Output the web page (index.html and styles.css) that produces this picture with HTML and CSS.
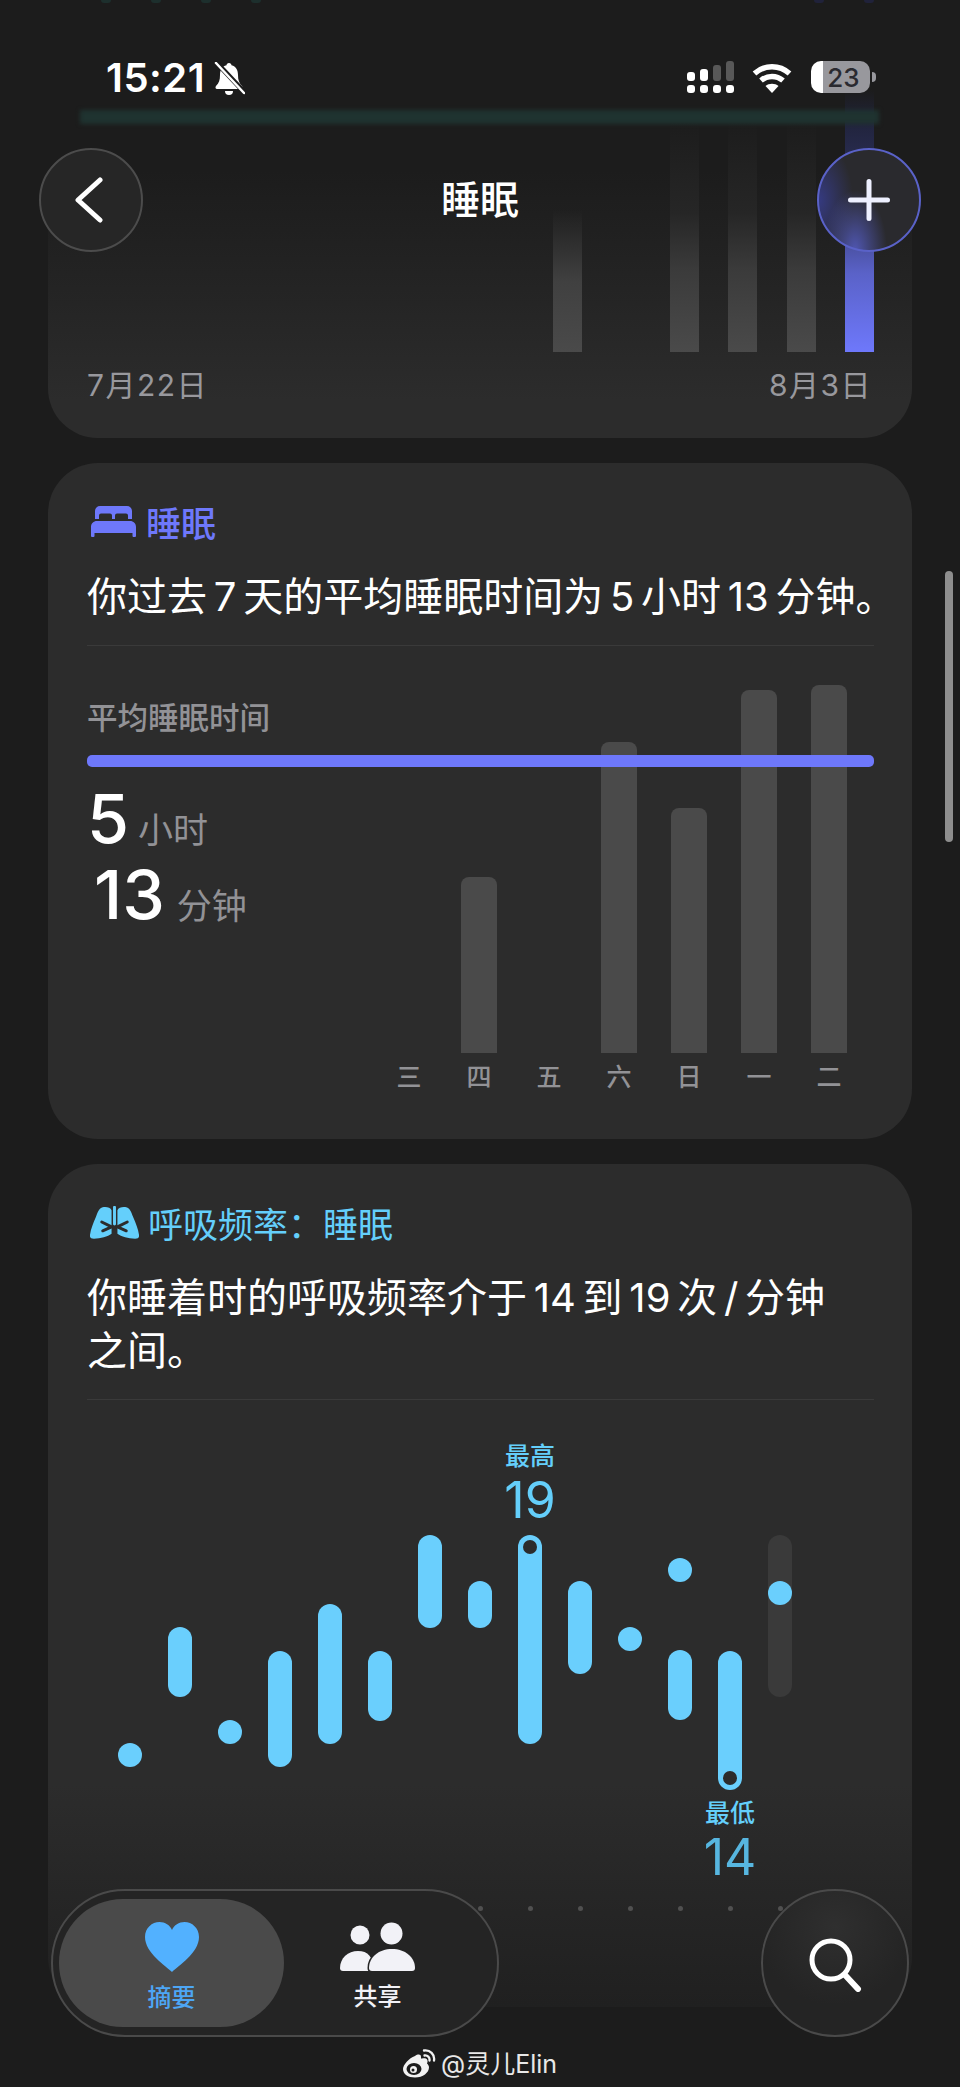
FILE: index.html
```html
<!DOCTYPE html>
<html lang="zh-CN">
<head>
  <meta charset="UTF-8">
  <title>睡眠</title>
  <link rel="stylesheet" href="styles.css">
</head>
<body>
<div class="page">

  <div class="feed">

    <section class="card card-top">
      <div class="peek">
        <i class="teal"></i><i class="teal"></i><i class="teal"></i><i class="teal"></i>
        <b></b>
        <i class="blue"></i><i class="blue"></i>
      </div>
      <div class="goal-line"></div>
      <div class="days">
        <span></span><span></span><span></span><span></span><span></span><span></span><span></span>
        <span class="short"></span>
        <span></span>
        <span class="tall"></span>
        <span class="tall"></span>
        <span class="tall"></span>
        <span class="today"></span>
      </div>
      <div class="range">
        <span>7月22日</span>
        <span>8月3日</span>
      </div>
    </section>

    <section class="card card-sleep">
      <h2 class="card-title sleep">
        <svg class="icon-bed" viewBox="0 0 45 31"><path fill="#6e78fb" d="M9 0h27a5 5 0 0 1 5 5v8h-4V9.500a2 2 0 0 0-2-2h-9a2 2 0 0 0-2 2V13h-3V9.500a2 2 0 0 0-2-2h-9a2 2 0 0 0-2 2V13H4V5a5 5 0 0 1 5-5z"/><path fill="#6e78fb" d="M6 15h33c3.500 0 6 2.500 6 6v9a1 1 0 0 1-1 1h-1.500a1 1 0 0 1-1-1v-3H3.500v3a1 1 0 0 1-1 1H1a1 1 0 0 1-1-1v-9c0-3.500 2.500-6 6-6z"/></svg>
        睡眠
      </h2>
      <p class="summary">你过去 7 天的平均睡眠时间为 5 小时 13 分钟。</p>
      <div class="sleep-body">
        <div class="avg-line"></div>
        <div class="metrics">
          <div class="metrics-label">平均睡眠时间</div>
          <div class="metric"><strong>5</strong><span>小时</span></div>
          <div class="metric second"><strong>13</strong><span>分钟</span></div>
        </div>
        <div class="week">
          <div class="day"><div class="day-bar" style="height:0"></div><span>三</span></div>
          <div class="day"><div class="day-bar" style="height:176px"></div><span>四</span></div>
          <div class="day"><div class="day-bar" style="height:0"></div><span>五</span></div>
          <div class="day"><div class="day-bar" style="height:311px"></div><span>六</span></div>
          <div class="day"><div class="day-bar" style="height:245px"></div><span>日</span></div>
          <div class="day"><div class="day-bar" style="height:363px"></div><span>一</span></div>
          <div class="day"><div class="day-bar" style="height:368px"></div><span>二</span></div>
        </div>
      </div>
    </section>

    <section class="card card-resp">
      <h2 class="card-title resp">
        <svg class="icon-lungs" viewBox="0 0 50 33">
          <path fill="#64cffb" d="M22 4C21 1 16 0 13 1 9 2 8 6 6 11 3 18 1 23 0 29c-.4 3 1 4 4 4 7 0 14-2 18-5z"/>
          <path fill="#64cffb" d="M28 4c1-3 6-4 9-3 4 1 5 5 7 10 3 7 5 12 6 18 .4 3-1 4-4 4-7 0-14-2-18-5z"/>
          <path fill="none" stroke="#64cffb" stroke-width="3" stroke-linecap="round" d="M25 1v17"/>
          <path fill="none" stroke="#2c2c2c" stroke-width="3" stroke-linecap="round" d="M22 21l-10-5M22 21l-9 4M28 21l10-5M28 21l9 4"/>
        </svg>
        <span class="title-text">呼吸频率&#65306;睡眠</span>
      </h2>
      <p class="summary">你睡着时的呼吸频率介于 14 到 19 次 / 分钟<br>之间。</p>
      <div class="resp-body">
        <div class="resp-chart">
          <div class="resp-col"><div class="seg" style="margin-top:208px;height:24px"></div></div>
          <div class="resp-col"><div class="seg" style="margin-top:92px;height:70px"></div></div>
          <div class="resp-col"><div class="seg" style="margin-top:185px;height:24px"></div></div>
          <div class="resp-col"><div class="seg" style="margin-top:116px;height:116px"></div></div>
          <div class="resp-col"><div class="seg" style="margin-top:69px;height:140px"></div></div>
          <div class="resp-col"><div class="seg" style="margin-top:116px;height:70px"></div></div>
          <div class="resp-col"><div class="seg" style="margin-top:0;height:93px"></div></div>
          <div class="resp-col"><div class="seg" style="margin-top:46px;height:47px"></div></div>
          <div class="resp-col">
            <div class="extreme high"><span>最高</span><strong>19</strong></div>
            <div class="seg hole-top" style="margin-top:0;height:209px"></div>
          </div>
          <div class="resp-col"><div class="seg" style="margin-top:46px;height:93px"></div></div>
          <div class="resp-col"><div class="seg" style="margin-top:92px;height:24px"></div></div>
          <div class="resp-col">
            <div class="seg" style="margin-top:23px;height:24px"></div>
            <div class="seg" style="margin-top:68px;height:70px"></div>
          </div>
          <div class="resp-col">
            <div class="seg hole-bottom" style="margin-top:116px;height:139px"></div>
            <div class="extreme low"><span>最低</span><strong>14</strong></div>
          </div>
          <div class="resp-col">
            <div class="track"><div class="seg" style="margin-top:46px;height:24px"></div></div>
          </div>
        </div>
        <div class="ticks">
          <i></i><i></i><i></i><i></i><i></i><i></i><i></i><i></i><i></i><i></i><i></i><i></i><i></i><i></i>
        </div>
      </div>
    </section>
  </div>

  <div class="scroll-thumb"></div>

  <header class="status">
    <div class="status-left">
      <span class="clock">15:21</span>
      <svg class="icon-bell" viewBox="0 0 32 33">
        <path fill="#fff" d="M16 1c1.500 0 2.500 1 2.500 2.300C23 4.500 25 8 25 13c0 5 1 8 4 11 1 1 .5 3-1 3H4c-1.500 0-2-2-1-3 3-3 4-6 4-11 0-5 2-8.500 6.500-9.700C13.500 2 14.500 1 16 1z"/>
        <path fill="#fff" d="M12 29h8a4 4 0 0 1-8 0z"/>
        <path fill="none" stroke="#1c1c1c" stroke-width="5" d="M1-2l32 34"/>
        <path fill="none" stroke="#fff" stroke-width="2.500" stroke-linecap="round" d="M3 1l28 30"/>
      </svg>
    </div>
    <div class="status-right">
      <div class="signal">
        <div class="signal-col"><i style="height:9px"></i><i style="height:8px"></i></div>
        <div class="signal-col"><i style="height:12px"></i><i style="height:8px"></i></div>
        <div class="signal-col off"><i style="height:16px"></i><i style="height:8px"></i></div>
        <div class="signal-col off"><i style="height:20px"></i><i style="height:8px"></i></div>
      </div>
      <svg class="icon-wifi" viewBox="0 0 40 30">
        <path fill="none" stroke="#fff" stroke-width="5.500" d="M2.500 10.500c10-9 25-9 35 0"/>
        <path fill="none" stroke="#fff" stroke-width="5.500" d="M9 17.500c6.500-5.500 15.500-5.500 22 0"/>
        <path fill="#fff" d="M20 30l-6.500-7c3.500-3 9.500-3 13 0z"/>
      </svg>
      <div class="battery"><span>23</span></div>
      <i class="battery-nub"></i>
    </div>
  </header>

  <nav class="topnav">
    <button class="round-btn">
      <svg class="icon-back" viewBox="0 0 28 46"><path fill="none" stroke="#fff" stroke-width="5" stroke-linecap="round" stroke-linejoin="round" d="M25 3L3 23l22 20"/></svg>
    </button>
    <h1 class="nav-title">睡眠</h1>
    <button class="round-btn add">
      <svg class="icon-plus" viewBox="0 0 42 42"><path fill="none" stroke="#eef0ff" stroke-width="5" stroke-linecap="round" d="M21 2.500v37M2.500 21h37"/></svg>
    </button>
  </nav>

  <div class="dock">
    <div class="tabs">
      <div class="tab current">
        <svg class="icon-heart" viewBox="0 0 54 50"><path fill="#52b1ff" d="M27 50C21 44 0 31 0 15 0 6 7 0 14.500 0 20 0 25 3 27 8c2-5 7-8 12.500-8C47 0 54 6 54 15c0 16-21 29-27 35z"/></svg>
        <span>摘要</span>
      </div>
      <div class="tab share">
        <svg class="icon-people" viewBox="0 0 75 49">
          <circle cx="20" cy="13" r="9.500" fill="#f2f2f7"/>
          <path fill="#f2f2f7" d="M0 46c0-10 8-17 18-17s15 6 15 17c0 2-1 3-3 3H3c-2 0-3-1-3-3z"/>
          <circle cx="51.500" cy="11.500" r="11" fill="#f2f2f7"/>
          <path fill="#f2f2f7" stroke="#242424" stroke-width="3" paint-order="stroke" d="M29 46c0-11 10-19 23-19s23 8 23 19c0 2-1 3-3 3H32c-2 0-3-1-3-3z"/>
        </svg>
        <span>共享</span>
      </div>
    </div>
    <button class="search-btn">
      <svg class="icon-search" viewBox="0 0 54 54"><circle cx="23" cy="22" r="19" fill="none" stroke="#fff" stroke-width="5"/><path stroke="#fff" stroke-width="6" stroke-linecap="round" d="M37 37l13 14"/></svg>
    </button>
  </div>

  <div class="watermark">
    <svg class="icon-weibo" viewBox="0 0 34 30">
      <path fill="#f2f2f2" d="M13 7c3-2 6-2 6 1 0 1 0 2 1 1.500 4-1 7 1 5 5 1 1 2 2 2 4 0 5-6 10-14 10C6 28.500 1 25 1 20c0-4 6-11 12-13z"/>
      <ellipse cx="12" cy="20" rx="7.500" ry="6" fill="#1c1c1c"/>
      <circle cx="11.500" cy="20.500" r="3.500" fill="#f2f2f2"/>
      <circle cx="11" cy="21" r="1.500" fill="#1c1c1c"/>
      <path fill="none" stroke="#f2f2f2" stroke-width="2.300" stroke-linecap="round" d="M22 1.500c6-1 11 4 10 10M22.500 6.500c3-.5 5.500 2 5 5"/>
    </svg>
    <span>@灵儿Elin</span>
  </div>

</div>
</body>
</html>
```

FILE: styles.css
```css
* {
  box-sizing: border-box;
}

body {
  margin: 0;
  background: #1c1c1c;
  font-family: "Inter", "Noto Sans CJK SC", sans-serif;
  color: #fff;
}

.page {
  position: relative;
  width: 960px;
  height: 2087px;
  overflow: hidden;
  background: #1c1c1c;
}

.feed {
  display: flex;
  flex-direction: column;
  gap: 25px;
  padding: 0 48px;
}

/* cards */

.card {
  position: relative;
  padding: 38px 38px 51px 39px;
  border-radius: 50px;
  background: #2c2c2c;
}

.card-title {
  display: flex;
  align-items: center;
  gap: 11px;
  height: 40px;
  margin: 0;
  font-size: 35px;
  font-weight: 500;
}

.card-title.sleep {
  color: #6e78fb;
  gap: 10px;
}

.card-title.resp {
  color: #64cffb;
  font-weight: 400;
  gap: 9px;
}

.title-text {
  font-family: "Noto Sans CJK SC", sans-serif;
}

.icon-bed {
  flex: none;
  width: 45px;
  height: 31px;
  margin-left: 4px;
}

.icon-lungs {
  flex: none;
  width: 49px;
  height: 33px;
  margin-left: 3px;
}

.summary {
  margin: 29px 0 0;
  padding-bottom: 22px;
  border-bottom: 1px solid #3a3a3a;
  font-size: 40px;
  line-height: 53px;
  word-spacing: -4.500px;
  white-space: nowrap;
}

/* top card, scrolled mostly under the nav */

.card-top {
  height: 438px;
  padding: 0 38px 0 39px;
  border-radius: 0 0 50px 50px;
  background: linear-gradient(to bottom, rgba(44, 44, 44, 0) 170px, rgba(44, 44, 44, 0.55) 300px, #2c2c2c 400px);
  display: flex;
  flex-direction: column;
}

.peek {
  display: flex;
  gap: 40px;
  height: 3px;
  margin: 0 0 0 14px;
}

.peek i {
  width: 10px;
  height: 3px;
  border-radius: 0 0 4px 4px;
}

.peek b {
  flex: 1;
}

.peek .teal {
  background: #1d2f2d;
}

.peek .blue {
  background: #20223a;
}

.goal-line {
  position: absolute;
  top: 110px;
  left: 32px;
  right: 33px;
  height: 14px;
  background: #1f3330;
  filter: blur(2px);
}

.days {
  display: flex;
  justify-content: flex-end;
  align-items: flex-end;
  gap: 29.400px;
  height: 349px;
}

.days span {
  width: 29px;
  height: 0;
}

.days .short {
  height: 142px;
  background: linear-gradient(to top, #4a4a4a, #404040 50%, #292929 85%, transparent);
}

.days .tall {
  height: 232px;
  background: linear-gradient(to top, #4a4a4a, #3b3b3b 35%, #262626 60%, #212121 80%, transparent);
}

.days .today {
  height: 262px;
  background: linear-gradient(to top, #6e78fb, #5a62c8 30%, #2f3360 60%, #222540 85%, transparent);
}

.range {
  display: flex;
  justify-content: space-between;
  margin-top: 11px;
  padding-right: 2px;
  font-size: 30px;
  letter-spacing: 1.500px;
  line-height: 44px;
  color: #98989d;
}

/* sleep */

.card-sleep {
  padding-bottom: 49px;
}

.sleep-body {
  position: relative;
  display: flex;
  justify-content: space-between;
  height: 444px;
  padding-right: 10px;
}

.avg-line {
  position: absolute;
  top: 109px;
  left: 0;
  right: 0;
  height: 12px;
  border-radius: 5px;
  background: #6e78fb;
}

.metrics {
  padding-top: 57px;
}

.metrics-label {
  font-size: 30.500px;
  font-weight: 500;
  line-height: 30px;
  color: #929296;
}

.metric {
  display: flex;
  align-items: baseline;
  gap: 9px;
  margin-top: 54px;
  height: 62px;
}

.metric.second {
  margin-top: 14px;
  padding-left: 7px;
  gap: 12px;
}

.metric strong {
  font-size: 68px;
  font-weight: 500;
  line-height: 62px;
}

.metric span {
  font-size: 35px;
  color: #929296;
}

.week {
  display: flex;
}

.day {
  display: flex;
  flex-direction: column;
  justify-content: flex-end;
  align-items: center;
  width: 70px;
}

.day-bar {
  width: 36px;
  border-radius: 8px 8px 0 0;
  background: #4a4a4a;
}

.day span {
  margin-top: 11px;
  font-size: 25px;
  font-weight: 500;
  line-height: 26px;
  color: #929296;
}

/* respiratory rate */

.card-resp {
  height: 843px;
  padding-bottom: 0;
  background: linear-gradient(to bottom, #2c2c2c 620px, #202020 100%);
}

.resp-body {
  padding: 135px 0 0 31px;
}

.resp-chart {
  display: flex;
  gap: 26px;
  height: 255px;
}

.resp-col {
  position: relative;
  width: 24px;
}

.seg {
  position: relative;
  width: 24px;
  border-radius: 12px;
  background: #6acffd;
}

.hole-top::after,
.hole-bottom::after {
  content: "";
  position: absolute;
  left: 5px;
  width: 14px;
  height: 14px;
  border-radius: 50%;
  background: #2c2c2c;
}

.hole-top::after {
  top: 5px;
}

.hole-bottom::after {
  bottom: 5px;
}

.track {
  height: 162px;
  border-radius: 12px;
  background: #3a3a3a;
  overflow: hidden;
}

.extreme {
  position: absolute;
  left: -20px;
  display: flex;
  flex-direction: column;
  align-items: center;
  width: 64px;
  color: #64cffb;
}

.extreme span {
  font-size: 25px;
  font-weight: 500;
  line-height: 24px;
}

.extreme strong {
  margin-top: 10px;
  font-size: 50px;
  font-weight: 400;
  line-height: 44px;
}

.extreme.high {
  top: -91px;
}

.extreme.low {
  top: 266px;
}

.extreme.low strong {
  color: #57b6e0;
}

.ticks {
  display: flex;
  gap: 26px;
  margin-top: 116px;
}

.ticks i {
  display: flex;
  justify-content: center;
  width: 24px;
}

.ticks i::before {
  content: "";
  width: 5px;
  height: 5px;
  border-radius: 50%;
  background: #505050;
}

.scroll-thumb {
  position: absolute;
  top: 571px;
  right: 7px;
  width: 8px;
  height: 271px;
  border-radius: 4px;
  background: #8e8e8e;
}

/* status bar */

.status {
  position: absolute;
  top: 61px;
  left: 106px;
  right: 84px;
  display: flex;
  justify-content: space-between;
}

.status-left {
  display: flex;
  align-items: center;
  gap: 8px;
}

.clock {
  font-size: 40px;
  font-weight: 600;
  line-height: 34px;
  letter-spacing: 0.500px;
}

.icon-bell {
  width: 32px;
  height: 33px;
}

.status-right {
  display: flex;
  align-items: flex-start;
}

.signal {
  display: flex;
  gap: 5px;
  margin-right: 18px;
}

.signal-col {
  display: flex;
  flex-direction: column;
  justify-content: flex-end;
  gap: 4px;
  width: 8px;
  height: 32px;
}

.signal-col i {
  display: block;
  border-radius: 3px;
  background: #fff;
}

.signal-col.off i:first-child {
  background: #585858;
}

.icon-wifi {
  width: 40px;
  height: 30px;
  margin: 2px 19px 0 0;
}

.battery {
  display: flex;
  align-items: center;
  justify-content: center;
  width: 59px;
  height: 32px;
  padding-left: 6px;
  border-radius: 10px;
  background: linear-gradient(to right, #fff 12px, #98989d 12px);
}

.battery span {
  font-size: 26px;
  font-weight: 500;
  color: #2a2a30;
}

.battery-nub {
  width: 4px;
  height: 10px;
  margin: 11px 0 0 2px;
  border-radius: 0 4px 4px 0;
  background: #98989d;
}

/* nav */

.topnav {
  position: absolute;
  top: 148px;
  left: 39px;
  right: 39px;
  display: flex;
  align-items: center;
  justify-content: space-between;
}

.round-btn {
  display: flex;
  align-items: center;
  justify-content: center;
  width: 104px;
  height: 104px;
  padding: 0;
  border: 2px solid #4c4c4c;
  border-radius: 50%;
  background: #262626;
}

.round-btn.add {
  border-color: #5a62c8;
  background:
    radial-gradient(ellipse 32px 60px at 36% 100%, #4f56b0, transparent),
    radial-gradient(ellipse 34px 60px at 0 50%, #353a80, transparent),
    #2a2a2e;
}

.icon-back {
  width: 28px;
  height: 46px;
  margin-right: 4px;
}

.icon-plus {
  width: 42px;
  height: 42px;
}

.nav-title {
  margin: 0;
  font-size: 39px;
  font-weight: 500;
  line-height: 50px;
}

/* tab bar */

.dock {
  position: absolute;
  top: 1889px;
  left: 51px;
  right: 51px;
  display: flex;
  justify-content: space-between;
}

.tabs {
  display: flex;
  width: 448px;
  height: 148px;
  padding: 8px 6px;
  border: 2px solid #4a4a4a;
  border-radius: 74px;
  background: #242424;
}

.tab {
  flex: none;
  display: flex;
  flex-direction: column;
  align-items: center;
  width: 185px;
  height: 128px;
  padding-top: 23px;
  border-radius: 64px;
}

.tab.current {
  width: 225px;
  background: #4a4a4a;
}

.tab.share {
  width: 187px;
}

.tab span {
  margin-top: 11px;
  font-size: 24px;
  font-weight: 500;
  line-height: 30px;
  color: #f2f2f7;
}

.tab.current span {
  color: #4da6f5;
}

.icon-heart {
  width: 54px;
  height: 50px;
}

.icon-people {
  width: 75px;
  height: 49px;
}

.search-btn {
  display: flex;
  align-items: center;
  justify-content: center;
  width: 148px;
  height: 148px;
  padding: 0;
  border: 2px solid #4a4a4a;
  border-radius: 50%;
  background: radial-gradient(circle at 50% 25%, #2f2f2f, #242424 60%);
}

.icon-search {
  width: 54px;
  height: 54px;
  margin-top: 4px;
}

.watermark {
  position: absolute;
  top: 2049px;
  left: 402px;
  display: flex;
  align-items: center;
  gap: 5px;
  font-size: 25px;
  line-height: 30px;
  color: #e8e8e8;
}

.icon-weibo {
  width: 34px;
  height: 30px;
}
```
